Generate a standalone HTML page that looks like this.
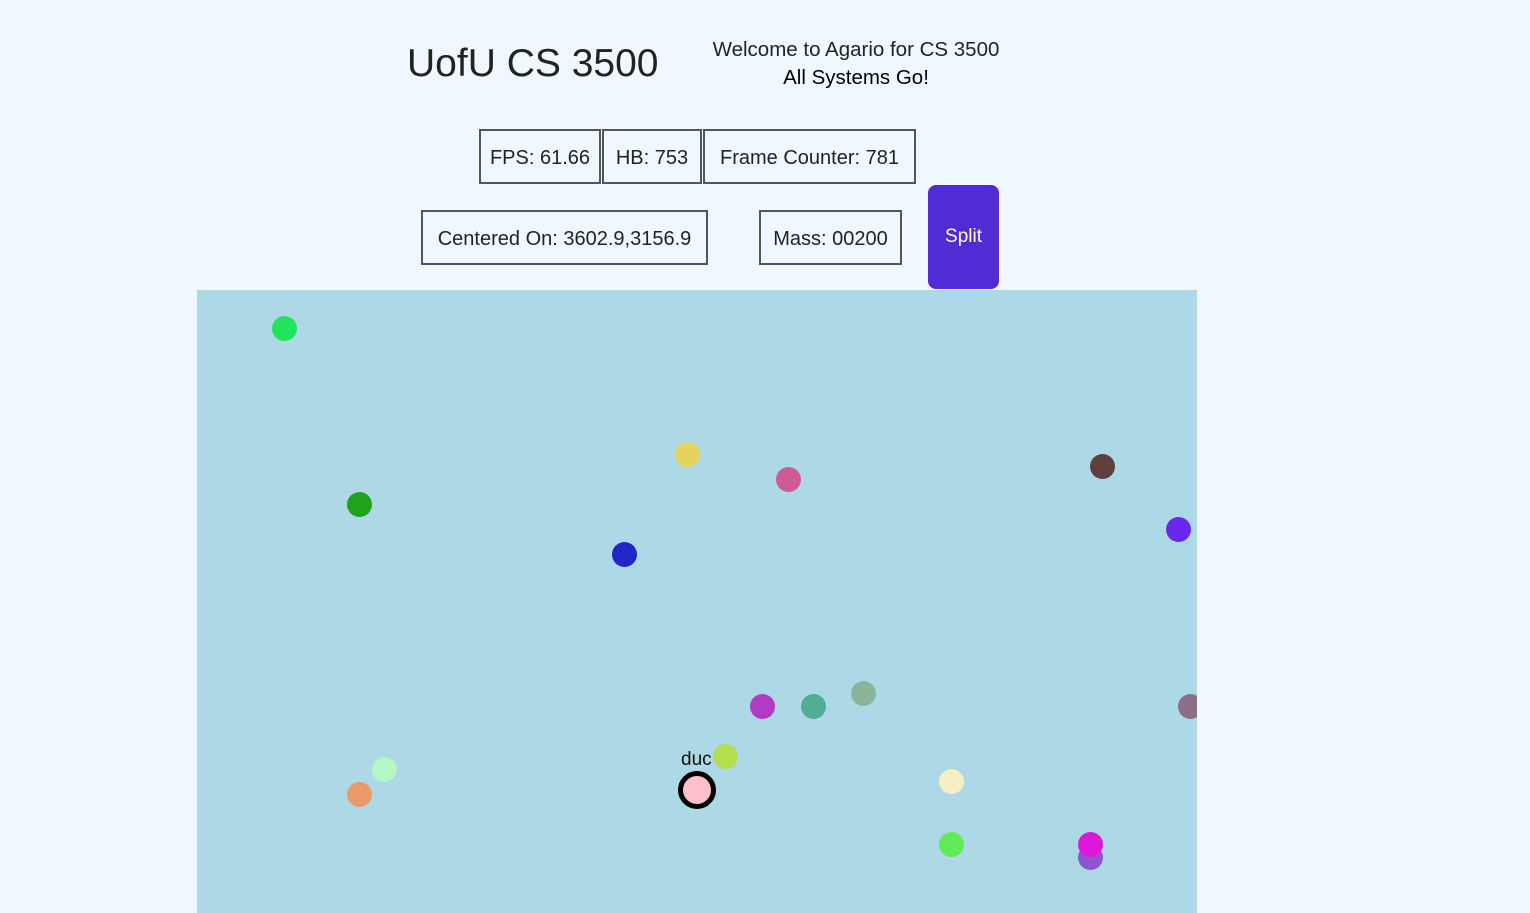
<!DOCTYPE html><html><head><style>
body{margin:0;width:1530px;height:913px;background:#f0f8ff;position:relative;overflow:hidden;font-family:"Liberation Sans",sans-serif;color:#222}
.a{position:absolute}
.b{position:absolute;border:2px solid #555;box-sizing:border-box;display:flex;align-items:center;justify-content:center;font-size:20px;color:#222;padding-top:3px}
.c{position:absolute;width:25px;height:25px;border-radius:50%}
</style></head><body>
<div class="a" style="left:407px;top:42px;font-size:39px;color:#222">UofU CS 3500</div>
<div class="a" style="left:690px;top:36px;width:332px;text-align:center;font-size:20.5px;line-height:28px">Welcome to Agario for CS 3500<br><span style="color:#000">All Systems Go!</span></div>
<div class="b" style="left:479px;top:129px;width:122px;height:55px">FPS: 61.66</div>
<div class="b" style="left:602px;top:129px;width:100px;height:55px">HB: 753</div>
<div class="b" style="left:703px;top:129px;width:213px;height:55px">Frame Counter: 781</div>
<div class="b" style="left:421px;top:210px;width:287px;height:55px">Centered On: 3602.9,3156.9</div>
<div class="b" style="left:759px;top:210px;width:143px;height:55px">Mass: 00200</div>
<div class="a" style="left:928px;top:185px;width:71px;height:104px;background:#512bd4;border-radius:8px;color:#fff;font-size:19px;display:flex;align-items:center;justify-content:center">Split</div>
<div class="a" style="left:197px;top:290px;width:1000px;height:623px;background:#add8e6;overflow:hidden">
<div class="c" style="left:75px;top:26px;background:#22e35a"></div>
<div class="c" style="left:478px;top:152px;background:#e6d35f"></div>
<div class="c" style="left:579px;top:177px;background:#d05a96"></div>
<div class="c" style="left:893px;top:164px;background:#5e3f3b"></div>
<div class="c" style="left:150px;top:202px;background:#1fa31b"></div>
<div class="c" style="left:969px;top:227px;background:#6927f0"></div>
<div class="c" style="left:415px;top:252px;background:#2127c7"></div>
<div class="c" style="left:654px;top:391px;background:#8bb59a"></div>
<div class="c" style="left:553px;top:404px;background:#b23ac4"></div>
<div class="c" style="left:604px;top:404px;background:#4fae94"></div>
<div class="c" style="left:981px;top:404px;background:#8c6e85"></div>
<div class="c" style="left:516px;top:454px;background:#b6dc4f"></div>
<div class="c" style="left:175px;top:467px;background:#b4f7c4"></div>
<div class="c" style="left:150px;top:492px;background:#eb9a67"></div>
<div class="c" style="left:742px;top:479px;background:#f7efc4"></div>
<div class="c" style="left:742px;top:542px;background:#60ec57"></div>
<div class="c" style="left:881px;top:555px;background:#8d55cf"></div>
<div class="c" style="left:881px;top:542px;background:#dd17d7"></div>
<div class="a" style="left:484px;top:459px;font-size:19px;color:#111">duc</div>
<div class="a" style="left:481px;top:481px;width:28px;height:28px;border:5px solid #000;border-radius:50%;background:#ffc0cb"></div>
</div>
</body></html>
